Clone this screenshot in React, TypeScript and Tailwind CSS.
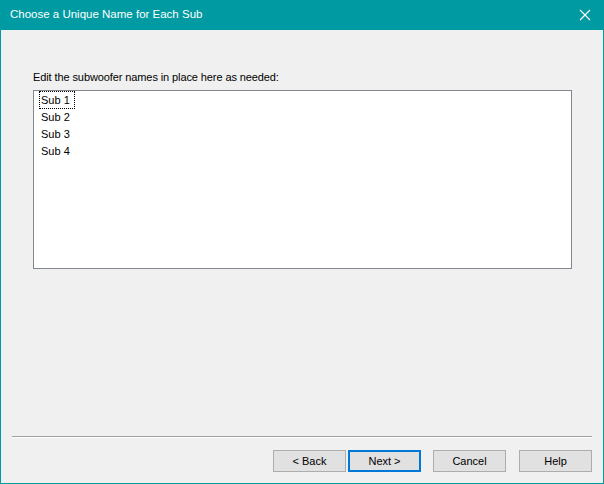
import React from "react";

const subs = ["Sub 1", "Sub 2", "Sub 3", "Sub 4"];
const buttons = [
  { label: "< Back", focus: false, gap: "" },
  { label: "Next >", focus: true, gap: "ml-[2px]" },
  { label: "Cancel", focus: false, gap: "ml-[12px]" },
  { label: "Help", focus: false, gap: "ml-[13px]" },
];

export default function App() {
  return (
    <div className="w-[604px] h-[484px] flex flex-col bg-[#009aa2] px-px pb-px text-[11px] text-black font-['Liberation_Sans',Arial,sans-serif]">
      {/* Title bar */}
      <div className="h-[30px] flex items-center justify-between pl-[9px] pr-[12px] text-white">
        <span className="text-[11.5px]">Choose a Unique Name for Each Sub</span>
        <svg width="12" height="12" viewBox="0 0 12 12" className="stroke-white">
          <path d="M1 1 L11 11 M11 1 L1 11" strokeWidth="1.1" />
        </svg>
      </div>

      {/* Body */}
      <div className="flex-1 flex flex-col bg-[#f0f0f0]">
        <div className="pt-[39px] pl-[32px] pr-[31px]">
          <div className="leading-[16px] mb-[5px] tracking-[-0.1px]">Edit the subwoofer names in place here as needed:</div>
          <div className="h-[179px] bg-white border border-[#828790] pl-[5px]">
            {subs.map((s, i) => (
              <div key={s} className="h-[17px] flex items-start">
                <span
                  className={
                    i === 0
                      ? "h-[18px] pl-[1px] pr-[4px] flex items-center border border-dotted border-black"
                      : "h-[18px] px-[2px] flex items-center"
                  }
                >
                  {s}
                </span>
              </div>
            ))}
          </div>
        </div>

        <div className="flex-1" />

        {/* Separator */}
        <div className="mx-[11px] border-t border-[#a0a0a0] border-b border-b-white" />

        {/* Buttons */}
        <div className="flex justify-end pr-[11px] pt-[12px] pb-[11px]">
          {buttons.map((b) => (
            <button
              key={b.label}
              className={
                "w-[73px] h-[22px] bg-[#e1e1e1] flex items-center justify-center " +
                b.gap +
                (b.focus ? " border-2 border-[#0078d7]" : " border border-[#adadad]")
              }
            >
              {b.label}
            </button>
          ))}
        </div>
      </div>
    </div>
  );
}
